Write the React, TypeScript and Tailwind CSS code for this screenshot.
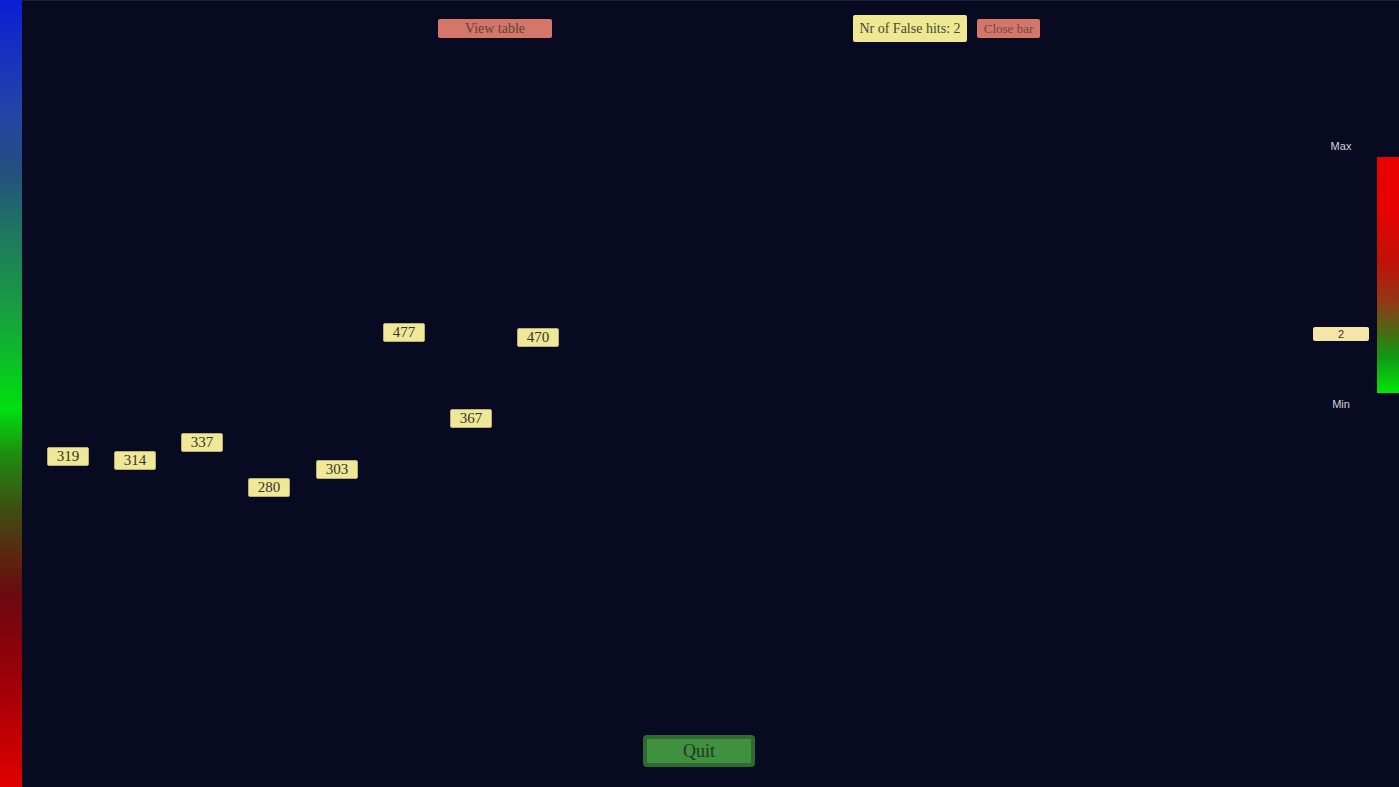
import React from 'react';

const nodes = [
  { v: 319, x: 25, y: 447 },
  { v: 314, x: 92, y: 451 },
  { v: 337, x: 159, y: 433 },
  { v: 280, x: 226, y: 478 },
  { v: 303, x: 294, y: 460 },
  { v: 367, x: 428, y: 409 },
  { v: 477, x: 361, y: 323 },
  { v: 470, x: 495, y: 328 },
];

const serif = { fontFamily: '"Liberation Serif", "DejaVu Serif", serif' };

export default function App() {
  return (
    <div className="flex h-[787px] w-[1399px] overflow-hidden bg-[#070a20]" style={serif}>
      {/* Left colour scale */}
      <div className="h-full w-[22px] shrink-0 bg-[linear-gradient(to_bottom,#0a1fd6_0%,#2444a8_14%,#24507e_22%,#1f7462_29%,#18a03e_40%,#00e010_52%,#1f8a10_58%,#3f4c12_65%,#5c2410_71%,#6c0812_76%,#a00008_87%,#e00000_100%)]" />

      {/* Main area */}
      <div className="relative flex h-full flex-1 flex-col border-t border-[#1c1f3a]">
        {/* Top bar */}
        <div className="flex items-center pt-[14px]">
          <button className="ml-[416px] h-[19px] w-[114px] rounded-[2px] bg-[#d4766a] text-[14px] leading-[19px] text-[#5e4238]">
            View table
          </button>
          <div className="ml-[301px] h-[27px] w-[114px] rounded-[2px] bg-[#eee890] text-center text-[14px] leading-[27px] text-[#46463a]">
            Nr of False hits: 2
          </div>
          <button className="ml-[10px] h-[19px] w-[63px] rounded-[2px] bg-[#d4766a] text-[13px] leading-[19px] text-[#6e4a42]">
            Close bar
          </button>
        </div>

        {/* Canvas */}
        <div className="relative flex-1">
          {nodes.map((n) => (
            <div
              key={n.v}
              className="absolute h-[19px] w-[42px] rounded-[2px] border border-[#b8b070] bg-[#eee898] text-center text-[15px] leading-[17px] text-[#353528]"
              style={{ left: n.x, top: n.y - 42 }}
            >
              {n.v}
            </div>
          ))}

          {/* Right legend */}
          <div className="absolute right-0 top-[98px] flex items-start">
            <div className="flex w-[60px] flex-col items-center" style={{ fontFamily: '"Liberation Sans", Arial, sans-serif' }}>
              <span className="text-[11px] leading-[12px] text-[#d4d4d8]">Max</span>
              <div className="mt-[175px] h-[14px] w-[56px] rounded-[2px] bg-[#f5e6a8] text-center text-[11px] leading-[14px] text-[#333]">2</div>
              <span className="mt-[57px] text-[11px] leading-[12px] text-[#d4d4d8]">Min</span>
            </div>
            <div className="ml-[6px] mt-[17px] h-[236px] w-[22px] bg-[linear-gradient(to_bottom,#ea0000_0%,#e80202_22%,#c01208_45%,#8e3a18_62%,#4a6a14_74%,#109a14_85%,#00e808_100%)]" />
          </div>
        </div>

        {/* Bottom */}
        <div className="flex pb-[20px]">
          <button className="ml-[621px] h-[32px] w-[112px] rounded-[4px] border-[4px] border-[#2f6a30] bg-[#3f913f] text-[18px] leading-[24px] text-[#243424]">
            Quit
          </button>
        </div>
      </div>
    </div>
  );
}
